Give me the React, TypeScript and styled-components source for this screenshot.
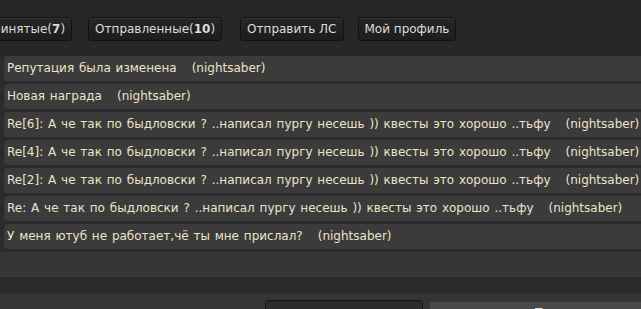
import React from "react";
import styled, { createGlobalStyle } from "styled-components";

const Global = createGlobalStyle`
  html, body { margin: 0; padding: 0; background: #272727; overflow: hidden; }
  body { font-family: "DejaVu Sans", Verdana, sans-serif; }
`;

const Page = styled.div`
  width: 641px;
  height: 309px;
  overflow: hidden;
  background: #272727;
`;

const Inner = styled.div`
  margin-left: -14px;
  width: 700px;
  display: flex;
  flex-direction: column;
`;

const Toolbar = styled.div`
  display: flex;
  padding: 17px 0 0 0;
  height: 40px;
  box-sizing: border-box;
`;

const Tab = styled.button<{ $ml: number }>`
  margin-left: ${(p) => p.$ml}px;
  height: 24px;
  box-sizing: border-box;
  padding: 0 6px;
  border: 1px solid #121212;
  border-radius: 3px;
  background: linear-gradient(#262626, #1d1d1d);
  box-shadow: inset 0 1px 0 #333;
  color: #dcdcdc;
  font-family: "DejaVu Sans", Verdana, sans-serif;
  font-size: 12px;
  line-height: 22px;
  white-space: nowrap;
  flex-shrink: 0;
  b { font-weight: bold; }
`;

const Panel = styled.div`
  margin-top: 16px;
  padding: 0 0 3px 18px;
  background: #2b2b2b;
  display: flex;
  flex-direction: column;
  gap: 3px;
`;

const Row = styled.div`
  height: 25px;
  box-sizing: border-box;
  background: #3b3b3b;
  border-radius: 4px 0 0 4px;
  padding-left: 3px;
  color: #ece3c9;
  font-size: 12px;
  word-spacing: 1px;
  line-height: 25px;
  white-space: pre;
`;

const Author = styled.span`
  margin-left: 15px;
`;

const Empty = styled.div`
  height: 25px;
  background: #363636;
  margin-left: -18px;
  margin-bottom: -3px;
`;

const Band = styled.div`
  height: 16px;
  background: #2a2a2a;
`;

const Bottom = styled.div`
  background: #353535;
  height: 40px;
  display: flex;
  padding: 7px 0 0 279px;
  gap: 7px;
  box-sizing: border-box;
`;

const Select = styled.div`
  width: 158px;
  flex-shrink: 0;
  height: 26px;
  box-sizing: border-box;
  border: 1px solid #141414;
  border-radius: 4px;
  background: #2c2c2c;
  color: #ddd;
  font-size: 12px;
  padding: 6px 8px 0 12px;
  display: flex;
  justify-content: space-between;
`;

const Arrow = styled.span`
  color: #bbb;
  font-size: 10px;
`;

const Field = styled.div`
  margin-top: 2px;
  width: 260px;
  flex-shrink: 0;
  height: 26px;
  background: #4a4a4a;
  color: #ddd;
  font-size: 12px;
  padding: 4px 0 0 105px;
  box-sizing: border-box;
`;

const thread = "А че так по быдловски ? ..написал пургу несешь )) квесты это хорошо ..тьфу";

const rows = [
  "Репутация была изменена",
  "Новая награда",
  `Re[6]: ${thread}`,
  `Re[4]: ${thread}`,
  `Re[2]: ${thread}`,
  `Re: ${thread}`,
  "У меня ютуб не работает,чё ты мне прислал?",
];

export default function App() {
  return (
    <Page>
      <Global />
      <Inner>
        <Toolbar>
          <Tab $ml={-9}>Принятые(<b>7</b>)</Tab>
          <Tab $ml={16}>Отправленные(<b>10</b>)</Tab>
          <Tab $ml={18}>Отправить ЛС</Tab>
          <Tab $ml={14}>Мой профиль</Tab>
        </Toolbar>
        <Panel>
          {rows.map((r, i) => (
            <Row key={i}>
              {r}
              <Author>(nightsaber)</Author>
            </Row>
          ))}
          <Empty />
        </Panel>
        <Band />
        <Bottom>
          <Select>
            Тема<Arrow>▼</Arrow>
          </Select>
          <Field>Текст</Field>
        </Bottom>
      </Inner>
    </Page>
  );
}
